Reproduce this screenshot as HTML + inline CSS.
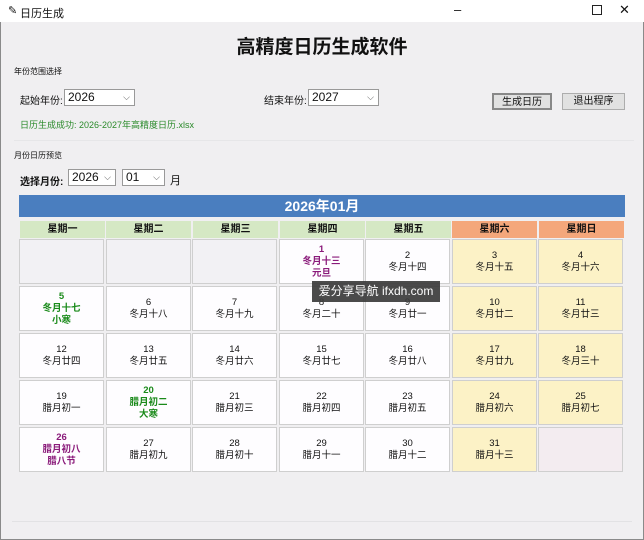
<!DOCTYPE html><html><head><meta charset="utf-8"><style>
body{margin:0;width:644px;height:540px;background:#f0eff1;font-family:"Liberation Sans","Noto Sans CJK SC",sans-serif;position:relative;overflow:hidden;color:#111}
.a{position:absolute}
.tb{left:0;top:0;width:644px;height:22px;background:#fff;font-size:11px}
.cb{background:#fff;border:1px solid #999;font-size:12px;height:17px;line-height:15px;padding-left:3px;box-sizing:border-box}
.cb span{position:absolute;right:4px;top:0;font-size:9px;color:#555}
.btn{background:#e1e1e1;border:1px solid #adadad;font-size:10px;text-align:center;line-height:15px;height:17px;box-sizing:border-box}
.h{top:221px;height:17px;font-size:10px;font-weight:bold;text-align:center;line-height:17px;background:#d5e8c4;width:85px}
.c{width:85px;height:45px;border:1px solid #cfcfcf;box-sizing:border-box;font-size:9.5px;text-align:center;line-height:12px;display:flex;flex-direction:column;justify-content:center;background:#fefdff}
.w{background:#fcf2c6}.e{background:#f2f1f4}.p{background:#f3ecf0}
.g{color:#1a8a1a;font-weight:bold}.m{color:#8a1a7a;font-weight:bold}
</style></head><body>
<div class="a" style="left:0;top:0;width:642px;height:538px;border:1px solid #8a8a8a"></div>
<div class="a tb"><span class="a" style="left:8px;top:4px">✎</span><span class="a" style="left:20px;top:5px">日历生成</span><span class="a" style="left:454px;top:2px;font-size:13px">–</span><span class="a" style="left:592px;top:5px;width:8px;height:8px;border:1px solid #222"></span><span class="a" style="left:619px;top:2px;font-size:13px">✕</span></div>
<div class="a" style="left:0;top:32px;width:644px;text-align:center;font-size:19px;font-weight:bold">高精度日历生成软件</div>
<div class="a" style="left:14px;top:66px;font-size:8px">年份范围选择</div>
<div class="a" style="left:20px;top:92px;font-size:10px">起始年份:</div>
<div class="a cb" style="left:64px;top:89px;width:71px">2026<span>⌵</span></div>
<div class="a" style="left:264px;top:92px;font-size:10px">结束年份:</div>
<div class="a cb" style="left:308px;top:89px;width:71px">2027<span>⌵</span></div>
<div class="a btn" style="left:492px;top:93px;width:60px;border:2px solid #888">生成日历</div>
<div class="a btn" style="left:562px;top:93px;width:63px">退出程序</div>
<div class="a" style="left:20px;top:118px;font-size:9px;color:#2a8a2a">日历生成成功: 2026-2027年高精度日历.xlsx</div>
<div class="a" style="left:14px;top:140px;width:620px;height:1px;background:#e6e6e8"></div>
<div class="a" style="left:14px;top:150px;font-size:8px">月份日历预览</div>
<div class="a" style="left:20px;top:173px;font-size:10px;font-weight:bold">选择月份:</div>
<div class="a cb" style="left:68px;top:169px;width:48px">2026<span>⌵</span></div>
<div class="a cb" style="left:122px;top:169px;width:43px">01<span>⌵</span></div>
<div class="a" style="left:170px;top:172px;font-size:11px">月</div>
<div class="a" style="left:19px;top:195px;width:606px;height:22px;background:#4a7ebf;color:#fff;font-size:14px;font-weight:bold;text-align:center;line-height:22px">2026年01月</div>
<div class="a h" style="left:20px">星期一</div><div class="a h" style="left:106px">星期二</div><div class="a h" style="left:193px">星期三</div><div class="a h" style="left:280px">星期四</div><div class="a h" style="left:366px">星期五</div><div class="a h" style="left:452px;background:#f4a77b">星期六</div><div class="a h" style="left:539px;background:#f4a77b">星期日</div>
<div class="a c e" style="left:19px;top:239px"></div><div class="a c e" style="left:106px;top:239px"></div><div class="a c e" style="left:192px;top:239px"></div>
<div class="a c m" style="left:279px;top:239px"><div>1</div><div>冬月十三</div><div>元旦</div></div>
<div class="a c" style="left:365px;top:239px"><div>2</div><div>冬月十四</div></div>
<div class="a c w" style="left:452px;top:239px"><div>3</div><div>冬月十五</div></div>
<div class="a c w" style="left:538px;top:239px"><div>4</div><div>冬月十六</div></div>
<div class="a c g" style="left:19px;top:286px"><div>5</div><div>冬月十七</div><div>小寒</div></div>
<div class="a c" style="left:106px;top:286px"><div>6</div><div>冬月十八</div></div>
<div class="a c" style="left:192px;top:286px"><div>7</div><div>冬月十九</div></div>
<div class="a c" style="left:279px;top:286px"><div>8</div><div>冬月二十</div></div>
<div class="a c" style="left:365px;top:286px"><div>9</div><div>冬月廿一</div></div>
<div class="a c w" style="left:452px;top:286px"><div>10</div><div>冬月廿二</div></div>
<div class="a c w" style="left:538px;top:286px"><div>11</div><div>冬月廿三</div></div>
<div class="a c" style="left:19px;top:333px"><div>12</div><div>冬月廿四</div></div>
<div class="a c" style="left:106px;top:333px"><div>13</div><div>冬月廿五</div></div>
<div class="a c" style="left:192px;top:333px"><div>14</div><div>冬月廿六</div></div>
<div class="a c" style="left:279px;top:333px"><div>15</div><div>冬月廿七</div></div>
<div class="a c" style="left:365px;top:333px"><div>16</div><div>冬月廿八</div></div>
<div class="a c w" style="left:452px;top:333px"><div>17</div><div>冬月廿九</div></div>
<div class="a c w" style="left:538px;top:333px"><div>18</div><div>冬月三十</div></div>
<div class="a c" style="left:19px;top:380px"><div>19</div><div>腊月初一</div></div>
<div class="a c g" style="left:106px;top:380px"><div>20</div><div>腊月初二</div><div>大寒</div></div>
<div class="a c" style="left:192px;top:380px"><div>21</div><div>腊月初三</div></div>
<div class="a c" style="left:279px;top:380px"><div>22</div><div>腊月初四</div></div>
<div class="a c" style="left:365px;top:380px"><div>23</div><div>腊月初五</div></div>
<div class="a c w" style="left:452px;top:380px"><div>24</div><div>腊月初六</div></div>
<div class="a c w" style="left:538px;top:380px"><div>25</div><div>腊月初七</div></div>
<div class="a c m" style="left:19px;top:427px"><div>26</div><div>腊月初八</div><div>腊八节</div></div>
<div class="a c" style="left:106px;top:427px"><div>27</div><div>腊月初九</div></div>
<div class="a c" style="left:192px;top:427px"><div>28</div><div>腊月初十</div></div>
<div class="a c" style="left:279px;top:427px"><div>29</div><div>腊月十一</div></div>
<div class="a c" style="left:365px;top:427px"><div>30</div><div>腊月十二</div></div>
<div class="a c w" style="left:452px;top:427px"><div>31</div><div>腊月十三</div></div>
<div class="a c p" style="left:538px;top:427px"></div>
<div class="a" style="left:312px;top:281px;width:128px;height:21px;background:#3c3c3c;color:#fff;font-size:12px;line-height:21px;text-align:center;opacity:.92">爱分享导航 ifxdh.com</div>
<div class="a" style="left:12px;top:521px;width:620px;height:1px;background:#e2e2e4"></div>
</body></html>
